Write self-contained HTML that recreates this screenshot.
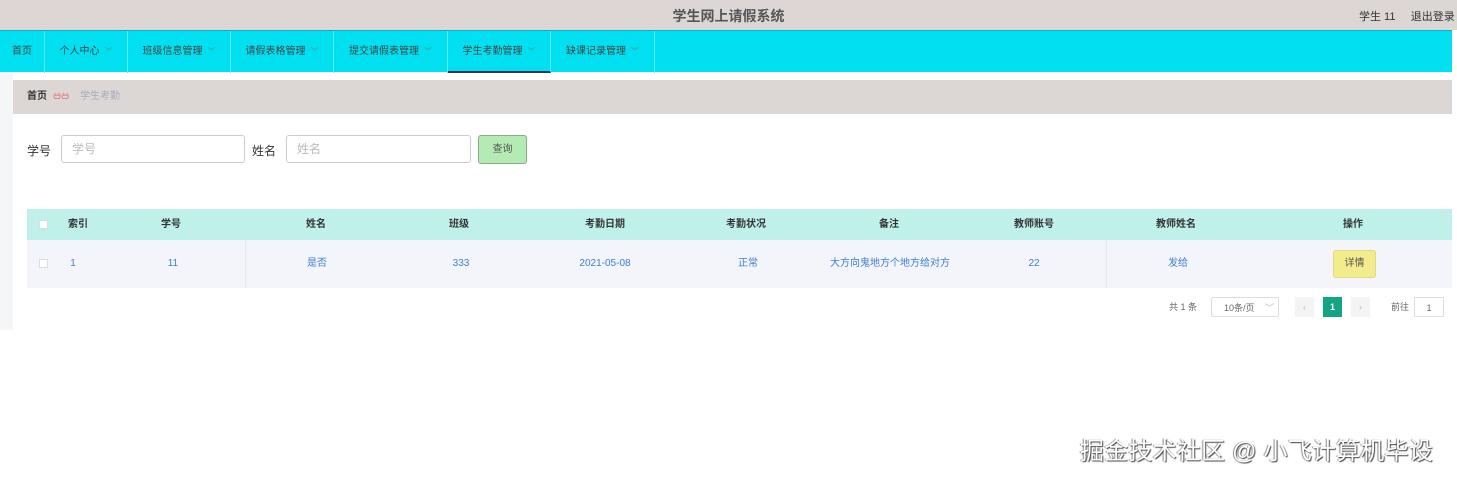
<!DOCTYPE html>
<html><head><meta charset="utf-8"><style>
*{margin:0;padding:0;box-sizing:border-box}
body{width:1457px;height:481px;background:#fff;font-family:"Liberation Sans","Noto Sans CJK SC",sans-serif;position:relative;overflow:hidden;font-size:11px;color:#333}
.top{position:absolute;left:0;top:0;width:1457px;height:30px;background:#dcd7d5}
.title{position:absolute;left:0;width:1457px;top:6px;text-align:center;font-size:14px;font-weight:bold;color:#555}
.user{position:absolute;left:1359px;top:8px;font-size:11px;color:#333;white-space:nowrap}
.nav{position:absolute;left:0;top:30px;width:1452px;height:42px;background:#00e0f0;border-top:1px solid #1ac}
.nav div{position:absolute;top:0;height:42px;line-height:42px;font-size:10px;color:#444;text-align:center;border-right:1px solid #5ee;white-space:nowrap}
.nav div.act{border-bottom:2px solid #335}
.ar{color:#777;font-size:8px;margin-left:5px}
.side{position:absolute;left:0;top:72px;width:13px;height:258px;background:#f4f6f8}
.bc{position:absolute;left:13px;top:80px;width:1439px;height:34px;background:#dcd7d5}
.bc span{position:absolute;top:11px;font-size:10px;line-height:12px}
.lbl{position:absolute;top:143px;font-size:12px;line-height:16px;color:#333}
.inp{position:absolute;top:135px;height:28px;border:1px solid #ccc;border-radius:3px;color:#bbb;font-size:12px;padding:6px 10px;line-height:14px}
.btn{position:absolute;left:478px;top:135px;width:49px;height:29px;background:#b4eab4;border:1px solid #8a8;border-radius:3px;text-align:center;line-height:27px;font-size:10px;color:#555}
.th{position:absolute;left:27px;top:209px;width:1425px;height:31px;background:#c0f0ea}
.tr{position:absolute;left:27px;top:240px;width:1425px;height:48px;background:#f4f5fa}
.c{position:absolute;transform:translateX(-50%);white-space:nowrap;font-size:10px;line-height:12px}
.h{top:219px;font-weight:bold;color:#333}
.d{top:258px;color:#3a7fd5}
.cb{position:absolute;left:39px;width:9px;height:9px;background:#fff;border:1px solid #ddd}
.det{position:absolute;left:1333px;top:250px;width:43px;height:28px;background:#f2ec8c;border:1px solid #dd8;border-radius:3px;text-align:center;line-height:26px;font-size:10px;color:#555}
.pg{position:absolute;top:297px;height:20px;line-height:20px;font-size:9px;color:#666}
.wm{position:absolute;left:1080px;top:437px;font-size:24px;line-height:30px;color:#fff;text-shadow:1px 1px 1px #444,-1px 0 1px #888;letter-spacing:0.2px;white-space:nowrap}
</style></head><body>
<div class="top"><div class="title">学生网上请假系统</div><div class="user">学生 11 &nbsp;&nbsp;&nbsp; 退出登录</div></div>
<div class="nav">
<div style="left:0;width:45px">首页</div>
<div style="left:45px;width:83px">个人中心<span class="ar">﹀</span></div>
<div style="left:128px;width:103px">班级信息管理<span class="ar">﹀</span></div>
<div style="left:231px;width:103px">请假表格管理<span class="ar">﹀</span></div>
<div style="left:334px;width:114px">提交请假表管理<span class="ar">﹀</span></div>
<div class="act" style="left:448px;width:103px">学生考勤管理<span class="ar">﹀</span></div>
<div style="left:551px;width:104px">缺课记录管理<span class="ar">﹀</span></div>
</div>
<div class="side"></div>
<div class="bc"><span style="left:14px;font-weight:bold">首页</span><span style="left:40px;color:#e33">ඏඏ</span><span style="left:67px;color:#aab">学生考勤</span></div>
<div class="lbl" style="left:27px">学号</div><div class="inp" style="left:61px;width:184px">学号</div>
<div class="lbl" style="left:252px">姓名</div><div class="inp" style="left:286px;width:185px">姓名</div>
<div class="btn">查询</div>
<div class="th"></div><div class="tr"></div>
<div style="position:absolute;left:245px;top:240px;width:1px;height:48px;background:#e6e8ee"></div>
<div style="position:absolute;left:1106px;top:240px;width:1px;height:48px;background:#e6e8ee"></div>
<div class="cb" style="top:220px"></div><div class="cb" style="top:259px"></div>
<div class="c h" style="left:78px">索引</div><div class="c h" style="left:171px">学号</div><div class="c h" style="left:316px">姓名</div><div class="c h" style="left:459px">班级</div><div class="c h" style="left:605px">考勤日期</div><div class="c h" style="left:746px">考勤状况</div><div class="c h" style="left:889px">备注</div><div class="c h" style="left:1034px">教师账号</div><div class="c h" style="left:1176px">教师姓名</div><div class="c h" style="left:1353px">操作</div>
<div class="c d" style="left:73px">1</div><div class="c d" style="left:173px">11</div><div class="c d" style="left:317px">是否</div><div class="c d" style="left:461px">333</div><div class="c d" style="left:605px">2021-05-08</div><div class="c d" style="left:748px">正常</div><div class="c d" style="left:890px">大方向鬼地方个地方给对方</div><div class="c d" style="left:1034px">22</div><div class="c d" style="left:1178px">发给</div>
<div class="det">详情</div>
<div class="pg" style="left:1169px">共 1 条</div>
<div class="pg" style="left:1211px;width:68px;border:1px solid #ddd;border-radius:2px;padding-left:12px">10条/页 <span style="margin-left:8px;color:#bbb">﹀</span></div>
<div class="pg" style="left:1295px;width:19px;background:#f4f4f5;text-align:center;color:#bbb">‹</div>
<div class="pg" style="left:1323px;width:19px;background:#13a486;text-align:center;color:#fff;font-weight:bold">1</div>
<div class="pg" style="left:1351px;width:19px;background:#f4f4f5;text-align:center;color:#bbb">›</div>
<div class="pg" style="left:1391px">前往</div>
<div class="pg" style="left:1414px;width:30px;border:1px solid #ddd;text-align:center">1</div>
<div class="wm">掘金技术社区 @ 小飞计算机毕设</div>
</body></html>
